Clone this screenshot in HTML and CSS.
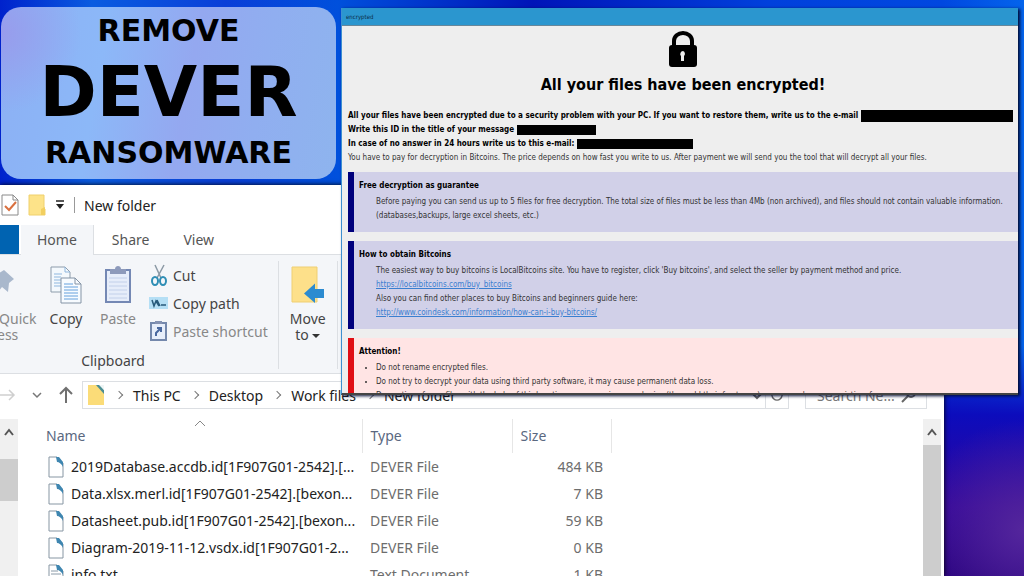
FILE: index.html
```html
<!DOCTYPE html>
<html lang="en">
<head>
    <meta charset="UTF-8">
    <meta name="viewport" content="width=device-width, initial-scale=1.0">
    <title>Remove Dever Ransomware</title>
    <link rel="stylesheet" href="styles.css">
</head>
<body>
    <main class="desktop">
        <!-- Explorer window -->
        <section class="explorer">
            <header class="quick-bar">
                <svg width="18" height="22" viewBox="0 0 18 22">
                    <path d="M1 1h11l5 5v15H1z" fill="#fff" stroke="#8a8a8a"/>
                    <path d="M12 1v5h5" fill="none" stroke="#8a8a8a"/>
                    <path d="M4 12l4 4 7-8" fill="none" stroke="#d9703f" stroke-width="2"/>
                </svg>
                <svg width="18" height="22" viewBox="0 0 18 22">
                    <path d="M1 1h15v13l1 1v6H1z" fill="#fde389" stroke="#efd06c"/>
                    <path d="M13 21v-6l4-2v8z" fill="#f2cf5f"/>
                </svg>
                <svg width="10" height="10" viewBox="0 0 10 10">
                    <path d="M1 1h8" stroke="#222" stroke-width="1.5"/>
                    <path d="M1 4h8L5 9z" fill="#222"/>
                </svg>
                <span class="divider"></span>
                <h2>New folder</h2>
            </header>

            <nav class="tabs">
                <span class="file-tab"></span>
                <a href="#" class="tab active">Home</a>
                <a href="#" class="tab">Share</a>
                <a href="#" class="tab">View</a>
            </nav>

            <div class="ribbon">
                <div class="group">
                    <div class="group-buttons">
                        <button type="button" class="big pin muted">
                            <svg width="34" height="40" viewBox="0 0 34 40">
                                <path d="M16 10l8-5 10 9-5 4-1 9-6-5-10 12 5-14-7-5z" fill="#a9b8cc"/>
                            </svg>
                            Pin to Quick<br>access
                        </button>
                        <button type="button" class="big copy">
                            <svg width="32" height="40" viewBox="0 0 32 40">
                                <path d="M1 2h14l5 5v20H1z" fill="#f4f9fd" stroke="#8d9cab"/>
                                <path d="M15 2v5h5M4 9h8M4 12h7M4 15h7M4 18h7M4 21h7" fill="none" stroke="#8fb7de"/>
                                <path d="M11 13h14l6 6v19H11z" fill="#f7fbff" stroke="#8393a5"/>
                                <path d="M25 13v6h6" fill="none" stroke="#8393a5"/>
                                <path d="M14 19h9M14 22h14M14 25h14M14 28h14M14 31h14M14 34h14" stroke="#65a0dc"/>
                            </svg>
                            Copy
                        </button>
                        <button type="button" class="big paste muted">
                            <svg width="28" height="40" viewBox="0 0 28 40">
                                <path d="M2 5h24v32H2z" fill="#e6edfa" stroke="#7488b4" stroke-width="2"/>
                                <path d="M5 13h18M5 17h18M5 21h18M5 25h18M5 29h18M5 33h18" stroke="#c2d0ea"/>
                                <path d="M6 4h5c0-4 6-4 6 0h5v5H6z" fill="#8d9abb"/>
                            </svg>
                            Paste
                        </button>
                        <div class="small-buttons">
                            <button type="button">
                                <svg width="20" height="22" viewBox="0 0 20 22">
                                    <path d="M6 1l6 13M15 1L8 14" stroke="#8b99a5" stroke-width="1.5"/>
                                    <ellipse cx="6" cy="17" rx="3" ry="4" fill="none" stroke="#2f8eb5" stroke-width="2"/>
                                    <ellipse cx="14" cy="17" rx="3" ry="4" fill="none" stroke="#2f8eb5" stroke-width="2"/>
                                </svg>
                                Cut
                            </button>
                            <button type="button">
                                <svg width="20" height="22" viewBox="0 0 20 22">
                                    <path d="M0 5h19v12H0z" fill="#b5dff5"/>
                                    <path d="M3 8l2 6 2-5 3 5M8 8l3 6M12 13h5" fill="none" stroke="#275a7b" stroke-width="1.5"/>
                                </svg>
                                Copy path
                            </button>
                            <button type="button" class="muted">
                                <svg width="20" height="22" viewBox="0 0 20 22">
                                    <path d="M2 3h15v17H2z" fill="#e7eefa" stroke="#7488ac" stroke-width="2"/>
                                    <path d="M6 1h7v3H6z" fill="#8492b2"/>
                                    <path d="M7 16v-3l4-4M8 8h4v4" fill="none" stroke="#49689f" stroke-width="2"/>
                                </svg>
                                Paste shortcut
                            </button>
                        </div>
                    </div>
                    <p class="group-name">Clipboard</p>
                </div>
                <div class="group">
                    <button type="button" class="big move">
                        <svg width="34" height="40" viewBox="0 0 34 40">
                            <path d="M1 2h25v35H1z" fill="#fde08a" stroke="#efcf73"/>
                            <path d="M33 24v9h-9v5L13 28.500l11-10V24z" fill="#2c8bd0"/>
                        </svg>
                        Move<br>to <span class="caret"></span>
                    </button>
                </div>
            </div>

            <div class="address-row">
                <svg width="16" height="16" viewBox="0 0 16 16">
                    <path d="M0 8h14M9 3l5 5-5 5" fill="none" stroke="#cfcfcf" stroke-width="1.500"/>
                </svg>
                <svg width="10" height="10" viewBox="0 0 10 10">
                    <path d="M1 3l4 4 4-4" fill="none" stroke="#777" stroke-width="1.500"/>
                </svg>
                <svg width="16" height="18" viewBox="0 0 16 18">
                    <path d="M8 17V2M2 8l6-6 6 6" fill="none" stroke="#707070" stroke-width="2"/>
                </svg>
                <div class="address">
                    <svg width="18" height="22" viewBox="0 0 18 22">
                        <path d="M1 1h11l5 6v14H1z" fill="#fbdc78"/>
                        <path d="M9 1h4l4 5v4z" fill="#4b8d93"/>
                        <path d="M12 1h5v5z" fill="#eef5f5"/>
                    </svg>
                    <span class="sep"></span><a href="#">This PC</a>
                    <span class="sep"></span><a href="#">Desktop</a>
                    <span class="sep"></span><a href="#">Work files</a>
                    <span class="sep"></span><a href="#">New folder</a>
                    <button type="button" class="drop" aria-label="Previous locations">
                        <svg width="14" height="14" viewBox="0 0 14 14">
                            <path d="M2 5l5 5 5-5" fill="none" stroke="#666" stroke-width="2"/>
                        </svg>
                    </button>
                    <button type="button" class="refresh" aria-label="Refresh">
                        <svg width="14" height="14" viewBox="0 0 14 14">
                            <path d="M3 4a5 5 0 1 0 8 0M11 0v4H7" fill="none" stroke="#666" stroke-width="1.500"/>
                        </svg>
                    </button>
                </div>
                <div class="search">
                    <input type="text" aria-label="Search" placeholder="Search Ne...">
                    <svg width="16" height="16" viewBox="0 0 16 16">
                        <circle cx="10" cy="6" r="4" fill="none" stroke="#666" stroke-width="2"/>
                        <path d="M7 9l-6 6" stroke="#666" stroke-width="2"/>
                    </svg>
                </div>
            </div>

            <div class="content">
                <div class="scrollbar left">
                    <svg width="12" height="10" viewBox="0 0 12 10">
                        <path d="M2 8l4-5 4 5" fill="none" stroke="#555" stroke-width="2"/>
                    </svg>
                    <span class="thumb"></span>
                </div>
                <div class="file-list">
                    <table>
                        <colgroup>
                            <col class="col-name">
                            <col class="col-type">
                            <col class="col-size">
                        </colgroup>
                        <thead>
                            <tr>
                                <th>Name
                                    <svg class="sort" width="12" height="8" viewBox="0 0 12 8">
                                        <path d="M1 7l5-5 5 5" fill="none" stroke="#888"/>
                                    </svg>
                                </th>
                                <th>Type</th>
                                <th>Size</th>
                            </tr>
                        </thead>
                        <tbody>
                            <tr>
                                <td><svg class="doc" viewBox="0 0 16 22"><use href="#page"/></svg>2019Database.accdb.id[1F907G01-2542].[...</td>
                                <td>DEVER File</td>
                                <td>484 KB</td>
                            </tr>
                            <tr>
                                <td><svg class="doc" viewBox="0 0 16 22"><use href="#page"/></svg>Data.xlsx.merl.id[1F907G01-2542].[bexon...</td>
                                <td>DEVER File</td>
                                <td>7 KB</td>
                            </tr>
                            <tr>
                                <td><svg class="doc" viewBox="0 0 16 22"><use href="#page"/></svg>Datasheet.pub.id[1F907G01-2542].[bexon...</td>
                                <td>DEVER File</td>
                                <td>59 KB</td>
                            </tr>
                            <tr>
                                <td><svg class="doc" viewBox="0 0 16 22"><use href="#page"/></svg>Diagram-2019-11-12.vsdx.id[1F907G01-2...</td>
                                <td>DEVER File</td>
                                <td>0 KB</td>
                            </tr>
                            <tr>
                                <td><svg class="doc" viewBox="0 0 16 22"><use href="#page"/><path d="M3 7h7M3 10h10M3 13h10M3 16h10" stroke="#8a9aa8"/></svg>info.txt</td>
                                <td>Text Document</td>
                                <td>1 KB</td>
                            </tr>
                        </tbody>
                    </table>
                </div>
                <div class="scrollbar right">
                    <svg width="12" height="10" viewBox="0 0 12 10">
                        <path d="M2 8l4-5 4 5" fill="none" stroke="#555" stroke-width="2"/>
                    </svg>
                    <span class="thumb"></span>
                </div>
            </div>
        </section>

        <!-- Title card -->
        <h1 class="title-card">
            <span>REMOVE</span>
            <strong>DEVER</strong>
            <span>RANSOMWARE</span>
        </h1>

        <!-- Ransom note window -->
        <section class="note">
            <header class="note-bar">encrypted</header>
            <div class="note-body">
                <svg class="lock" width="30" height="36" viewBox="0 0 30 36">
                    <path d="M6 14v-4a9 8 0 0 1 18 0v4" fill="none" stroke="#000" stroke-width="4"/>
                    <rect x="1" y="14" width="28" height="22" rx="3" fill="#000"/>
                    <path d="M15 20a3 3 0 0 1 1 5v5h-3v-5a3 3 0 0 1 2-5z" fill="#eee"/>
                </svg>
                <h2>All your files have been encrypted!</h2>
                <div class="intro">
                    <p><b>All your files have been encrypted due to a security problem with your PC. If you want to restore them, write us to the e-mail</b><span class="redacted long"></span></p>
                    <p><b>Write this ID in the title of your message</b><span class="redacted short"></span></p>
                    <p><b>In case of no answer in 24 hours write us to this e-mail:</b><span class="redacted medium"></span></p>
                    <p>You have to pay for decryption in Bitcoins. The price depends on how fast you write to us. After payment we will send you the tool that will decrypt all your files.</p>
                </div>
                <article class="panel">
                    <h3>Free decryption as guarantee</h3>
                    <p>Before paying you can send us up to 5 files for free decryption. The total size of files must be less than 4Mb (non archived), and files should not contain valuable information. (databases,backups, large excel sheets, etc.)</p>
                </article>
                <article class="panel">
                    <h3>How to obtain Bitcoins</h3>
                    <p>The easiest way to buy bitcoins is LocalBitcoins site. You have to register, click 'Buy bitcoins', and select the seller by payment method and price.</p>
                    <p><a href="#">https://localbitcoins.com/buy_bitcoins</a></p>
                    <p>Also you can find other places to buy Bitcoins and beginners guide here:</p>
                    <p><a href="#">http://www.coindesk.com/information/how-can-i-buy-bitcoins/</a></p>
                </article>
                <article class="panel attention">
                    <h3>Attention!</h3>
                    <ul>
                        <li>Do not rename encrypted files.</li>
                        <li>Do not try to decrypt your data using third party software, it may cause permanent data loss.</li>
                        <li>Decryption of your files with the help of third parties may cause increased price (they add their fee to our) or you can become a victim of a scam.</li>
                    </ul>
                </article>
            </div>
        </section>
    </main>

    <svg width="0" height="0" class="defs">
        <symbol id="page" viewBox="0 0 16 22">
            <path d="M1 1h8l6 6v14H1z" fill="#fff" stroke="#8796a3"/>
            <path d="M8 1h3l4 5v5c-1-3-4-5-6-5z" fill="#3f86b0"/>
        </symbol>
    </svg>
</body>
</html>
```
FILE: styles.css
```css
:root {
    --ui: "Noto Sans", "Open Sans", sans-serif;
    --note: "DejaVu Sans Condensed", "DejaVu Sans", sans-serif;
    --banner: "DejaVu Sans", sans-serif;
    --line: #dcdfe3;
    --ribbon: #f4f6f9;
}

* {
    margin: 0;
    padding: 0;
    box-sizing: border-box;
}

body {
    font-family: var(--ui);
    font-size: 14px;
    color: #444;
}

a {
    color: inherit;
    text-decoration: none;
}

button {
    font: inherit;
    color: inherit;
    background: none;
    border: none;
}

.defs {
    position: absolute;
}

.desktop {
    position: relative;
    height: 100vh;
    overflow: hidden;
    background:
        radial-gradient(circle at 100% 92%, #54269c 0, rgba(60, 12, 160, 0) 110px),
        linear-gradient(to bottom, rgba(20, 0, 150, 0) 60%, #0c0cbc 72%, #33069a 88%, #26007c 100%),
        linear-gradient(to right, #0022cc 0, #0a5ce0 9%, #0a3fd8 22%, #0050dc 33%, #0014b8 52%, #0040dc 75%, #0048e0 92%, #0464ec 100%);
}

/* Title card */
.title-card {
    position: absolute;
    top: 7px;
    left: 1px;
    width: 335px;
    height: 172px;
    display: flex;
    flex-direction: column;
    align-items: center;
    border-radius: 20px;
    background:
        radial-gradient(circle at 0 15%, #989cec 0, rgba(152, 156, 236, 0) 80px),
        linear-gradient(100deg, #8cb0f4 0, #8cb8f8 30%, #94a8f0 55%, #90aef0 75%, #8eb4ee 100%);
    font-family: var(--banner);
    color: #000;
    font-size: 30px;
    line-height: 48px;
}

.title-card strong {
    font-size: 69px;
    line-height: 74px;
}

/* Explorer */
.explorer {
    position: absolute;
    top: 185px;
    left: 0;
    right: 80px;
    bottom: 0;
    display: flex;
    flex-direction: column;
    background: #fff;
    border-right: 2px solid #fff;
    box-shadow: 0 0 5px #000;
    overflow: hidden;
}

.quick-bar {
    display: flex;
    align-items: center;
    gap: 9px;
    height: 40px;
    padding-left: 1px;
    flex: none;
}

.quick-bar h2 {
    font-size: 14px;
    font-weight: 400;
    color: #222;
}

.divider {
    width: 1px;
    height: 16px;
    background: #999;
}

.tabs {
    display: flex;
    gap: 2px;
    height: 30px;
    flex: none;
    border-bottom: 1px solid var(--line);
}

.file-tab {
    width: 19px;
    background: #0063b1;
}

.tab {
    padding: 0 16px;
    line-height: 30px;
    color: #555;
}

.tab.active {
    height: 30px;
    background: var(--ribbon);
    border-right: 1px solid var(--line);
}

.ribbon {
    display: flex;
    height: 119px;
    padding: 6px 0 4px;
    flex: none;
    background: var(--ribbon);
    border-bottom: 1px solid var(--line);
}

.group {
    display: flex;
    flex-direction: column;
    justify-content: space-between;
    border-right: 1px solid var(--line);
}

.group-buttons {
    display: flex;
}

.group-name {
    width: 226px;
    text-align: center;
    line-height: 16px;
}

.big {
    display: block;
    line-height: 16px;
    text-align: center;
    align-self: flex-start;
    white-space: nowrap;
}

.big svg {
    display: block;
    margin: 4px auto 6px;
}

.pin {
    width: 90px;
    margin-left: -48px;
}

.copy {
    width: 48px;
}

.paste {
    width: 56px;
}

.move {
    width: 58px;
}

.muted {
    color: #888;
}

.caret {
    display: inline-block;
    border: 4px solid transparent;
    border-top-color: #333;
    border-bottom: none;
    vertical-align: middle;
}

.small-buttons {
    display: flex;
    flex-direction: column;
    padding-left: 3px;
    padding-right: 10px;
}

.small-buttons button {
    display: flex;
    align-items: center;
    gap: 4px;
    height: 28px;
    white-space: nowrap;
}

.address-row {
    display: flex;
    align-items: center;
    gap: 16px;
    height: 44px;
    padding: 0 15px 2px 0;
    flex: none;
}

.address {
    flex: 1;
    display: flex;
    align-items: center;
    gap: 11px;
    height: 28px;
    margin-left: -8px;
    padding-left: 4px;
    border: 1px solid var(--line);
    color: #222;
}

.address-row > svg {
    flex: none;
}

.sep {
    width: 6px;
    height: 6px;
    border: solid #777;
    border-width: 1px 1px 0 0;
    transform: rotate(45deg);
}

.drop {
    margin-left: auto;
    display: flex;
}

.refresh {
    display: flex;
    align-items: center;
    align-self: stretch;
    margin-left: -10px;
    padding: 0 4px;
    border-left: 1px solid var(--line);
}

.search {
    display: flex;
    align-items: center;
    width: 122px;
    height: 28px;
    padding: 0 9px 0 11px;
    border: 1px solid var(--line);
}

.search input {
    flex: 1;
    min-width: 0;
    border: none;
    outline: none;
    font: inherit;
}

.search input::placeholder {
    color: #777;
}

.content {
    flex: 1;
    display: flex;
    min-height: 0;
    padding-top: 1px;
}

.scrollbar {
    display: flex;
    flex-direction: column;
    align-items: center;
    width: 18px;
    background: #f0f0f0;
}

.scrollbar svg {
    margin: 8px 0;
}

.thumb {
    width: 100%;
    background: #cdcdcd;
}

.left svg {
    margin-bottom: 22px;
}

.left .thumb {
    height: 42px;
}

.right {
    margin-right: 1px;
}

.right .thumb {
    flex: 1;
}

.file-list {
    flex: 1;
    min-width: 0;
    overflow: hidden;
}

table {
    table-layout: fixed;
    width: 593px;
    border-collapse: collapse;
}

.col-name {
    width: 344px;
}

.col-type {
    width: 150px;
}

.col-size {
    width: 99px;
}

th {
    position: relative;
    height: 34px;
    padding: 0 0 2px 8px;
    border-right: 1px solid #e6e6e6;
    text-align: left;
    font-weight: 400;
    color: #5a6880;
}

th:first-child {
    padding-left: 28px;
}

.sort {
    position: absolute;
    top: 0;
    left: 176px;
}

td {
    height: 27px;
    padding-left: 8px;
    line-height: 20px;
    white-space: nowrap;
    color: #6d6d6d;
}

td:first-child {
    padding-left: 30px;
    color: #222;
}

td:last-child {
    padding-right: 8px;
    text-align: right;
}

.doc {
    width: 16px;
    height: 22px;
    margin: -4px 7px -2px 0;
    vertical-align: middle;
}

/* Ransom note */
.note {
    position: absolute;
    top: 8px;
    left: 341px;
    right: 6px;
    height: 387px;
    overflow: hidden;
    background: #eee;
    border-left: 1px solid #3d8fd0;
    border-bottom: 2px solid #444;
    box-shadow: 2px 1px 3px #000a30;
    font-family: var(--note);
    font-size: 8px;
    line-height: 14px;
    color: #333;
}

.note-bar {
    height: 18px;
    padding-left: 4px;
    background: #2b96cf;
    border-bottom: 1px solid #68879a;
    line-height: 17px;
    font-size: 6px;
    color: #0c2c48;
}

.note-body {
    padding: 5px 0 0 6px;
}

.lock {
    display: block;
    margin: 0 auto;
}

.note h2 {
    margin: 6px 0 12px;
    font-size: 16px;
    line-height: 24px;
    text-align: center;
    color: #000;
}

.note b,
.note h3 {
    color: #000;
}

.intro p {
    display: flex;
    align-items: center;
    gap: 3px;
    height: 14px;
    white-space: nowrap;
}

.redacted {
    height: 10px;
    background: #000;
}

.long {
    width: 152px;
    height: 12px;
}

.short {
    width: 79px;
}

.medium {
    width: 116px;
}

.panel {
    margin-top: 9px;
    padding: 7px 10px 9px 5px;
    border-left: 6px solid #00007c;
    background: #d1d0e8;
}

.intro + .panel {
    margin-top: 7px;
}

.panel h3 {
    margin-bottom: 2px;
    font-size: 8px;
    line-height: 14px;
}

.panel p,
.panel ul {
    padding-left: 17px;
}

.panel a {
    color: #3a7fd0;
    text-decoration: underline;
}

.attention {
    border-left-color: #e00d14;
    background: #ffe4e4;
}
```
